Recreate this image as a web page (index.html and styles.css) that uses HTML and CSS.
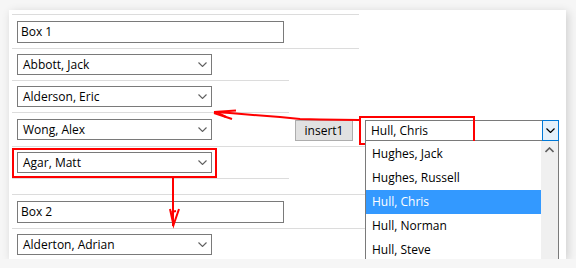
FILE: index.html
```html
<!DOCTYPE html>
<html lang="en">
<head>
    <meta charset="UTF-8">
    <title>Insert demo</title>
    <link rel="stylesheet" href="styles.css">
</head>
<body>
    <div class="card">
        <div class="row wide tall first">
            <input class="textbox" type="text" value="Box 1">
        </div>
        <div class="row">
            <div class="select">Abbott, Jack<svg class="chev" width="9" height="5" viewBox="0 0 9 5"><polyline points="0.5,0.5 4.5,4.5 8.5,0.5"/></svg></div>
        </div>
        <div class="row">
            <div class="select">Alderson, Eric<svg class="chev" width="9" height="5" viewBox="0 0 9 5"><polyline points="0.5,0.5 4.5,4.5 8.5,0.5"/></svg></div>
        </div>
        <div class="row longer tall">
            <div class="select">Wong, Alex<svg class="chev" width="9" height="5" viewBox="0 0 9 5"><polyline points="0.5,0.5 4.5,4.5 8.5,0.5"/></svg></div>
            <button class="btn">insert1</button>
            <div class="combo">
                <span class="combo-text">Hull, Chris</span>
                <span class="combo-btn"><svg width="9" height="5" viewBox="0 0 9 5"><polyline points="0.5,0.5 4.5,4.5 8.5,0.5"/></svg></span>
                <span class="mark mark-combo"></span>
                <div class="dropdown">
                    <div class="items">
                        <div class="item">Hughes, Jack</div>
                        <div class="item">Hughes, Russell</div>
                        <div class="item active">Hull, Chris</div>
                        <div class="item">Hull, Norman</div>
                        <div class="item">Hull, Steve</div>
                    </div>
                    <div class="scrollbar">
                        <svg width="9" height="6" viewBox="0 0 9 6"><polyline points="0.5,5 4.5,1 8.5,5"/></svg>
                    </div>
                </div>
            </div>
        </div>
        <div class="row">
            <div class="select marked">Agar, Matt<svg class="chev" width="9" height="5" viewBox="0 0 9 5"><polyline points="0.5,0.5 4.5,4.5 8.5,0.5"/></svg></div>
        </div>
        <div class="row longer spacer"></div>
        <div class="row longer tall">
            <input class="textbox" type="text" value="Box 2">
        </div>
        <div class="row">
            <div class="select">Alderton, Adrian<svg class="chev" width="9" height="5" viewBox="0 0 9 5"><polyline points="0.5,0.5 4.5,4.5 8.5,0.5"/></svg></div>
        </div>
    </div>

    <!-- annotation arrows -->
    <svg class="arrows" width="576" height="268" viewBox="0 0 576 268">
        <path d="M359 120 L320 119.5 L300 119 L280 117 L253 115 L230 113 L214 112"/>
        <path d="M214 112 L236 110.5"/>
        <path d="M214 113 L232 119"/>
        <path d="M218 113 L226 117"/>
        <path d="M173 178 L173 226"/>
        <path d="M170 209 L173.5 225 L179 209"/>
        <path d="M171.5 212 L176 211"/>
    </svg>
</body>
</html>
```

FILE: styles.css
```css
body {
    margin: 0;
    background-color: #f6f6f6;
    font-family: 'Open Sans', 'Noto Sans', sans-serif;
    font-size: 12px;
    color: #000;
}

.card {
    position: relative;
    width: 557px;
    height: 249px;
    margin: 10px 0 0 9px;
    padding: 4px 0 0 3px;
    box-sizing: border-box;
    background: #fff;
    box-shadow: 2px 2px 9px rgba(0,0,0,0.16);
    overflow: hidden;
}

.row {
    display: flex;
    align-items: center;
    width: 272px;
    height: 31px;
    padding-left: 5px;
    border-bottom: 1px solid #dcdcdc;
}

.row.first {
    border-top: 1px solid #dcdcdc;
}

.row.tall {
    height: 33px;
}

.row.wide {
    width: 342px;
}

.row.longer {
    width: 348px;
}

.row.spacer {
    height: 15px;
}

.textbox {
    width: 267px;
    height: 22px;
    margin: 0;
    padding: 0 3px;
    box-sizing: border-box;
    border: 1px solid #7a7a7a;
    font-family: inherit;
    font-size: 12px;
    color: #000;
    outline: none;
}

.select {
    position: relative;
    flex-shrink: 0;
    display: flex;
    align-items: center;
    justify-content: space-between;
    width: 195px;
    height: 21px;
    padding: 0 4px 0 5px;
    box-sizing: border-box;
    border: 1px solid #7a7a7a;
    background: #fff;
}

.chev polyline {
    fill: none;
    stroke: #606060;
    stroke-width: 1.1;
}

.select.marked::after {
    content: "";
    position: absolute;
    left: -6px;
    top: -5px;
    right: -6px;
    bottom: -6px;
    border: 2px solid #ff0000;
}

.btn {
    flex-shrink: 0;
    width: 58px;
    height: 21px;
    margin: 1px 0 0 83px;
    padding: 0;
    border: 1px solid #adadad;
    background: #e1e1e1;
    font-family: inherit;
    font-size: 12px;
    color: #000;
}

.combo {
    position: relative;
    flex-shrink: 0;
    display: flex;
    align-items: center;
    width: 194px;
    height: 21px;
    margin: 1px 0 0 12px;
    box-sizing: border-box;
    border: 1px solid #7a7a7a;
    background: #fff;
}

.combo-text {
    flex: 1;
    padding-left: 5px;
}

.combo-btn {
    display: flex;
    align-items: center;
    justify-content: center;
    width: 17px;
    height: 21px;
    margin: -1px -1px -1px 0;
    box-sizing: border-box;
    border: 1px solid #0078d7;
    background: #e5f1fb;
}

.combo-btn polyline {
    fill: none;
    stroke: #000;
    stroke-width: 1.2;
}

.mark-combo {
    position: absolute;
    left: -7px;
    top: -5px;
    width: 116px;
    height: 29px;
    box-sizing: border-box;
    border: 2px solid #ff0000;
}

.dropdown {
    position: absolute;
    left: -1px;
    top: 20px;
    display: flex;
    width: 194px;
    height: 140px;
    box-sizing: border-box;
    border: 1px solid #7a7a7a;
    border-top: none;
    background: #fff;
}

.items {
    flex: 1;
    padding-top: 1px;
}

.item {
    height: 24px;
    line-height: 24px;
    padding-left: 6px;
}

.item.active {
    background: #3399ff;
    color: #fff;
}

.scrollbar {
    width: 17px;
    background: #f0f0f0;
    display: flex;
    justify-content: center;
    padding-top: 6px;
    align-items: flex-start;
}

.scrollbar polyline {
    fill: none;
    stroke: #606060;
    stroke-width: 1.6;
}

.arrows {
    position: absolute;
    left: 0;
    top: 0;
    pointer-events: none;
}

.arrows path {
    fill: none;
    stroke: #ff0000;
    stroke-width: 2;
}
```
